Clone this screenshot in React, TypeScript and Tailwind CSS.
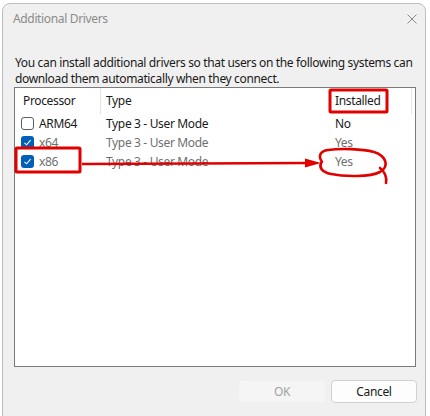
import React from "react";

interface DriverRow {
  processor: string;
  type: string;
  installed: string;
  checked: boolean;
  muted: boolean;
}

const rows: DriverRow[] = [
  { processor: "ARM64", type: "Type 3 - User Mode", installed: "No", checked: false, muted: false },
  { processor: "x64", type: "Type 3 - User Mode", installed: "Yes", checked: true, muted: true },
  { processor: "x86", type: "Type 3 - User Mode", installed: "Yes", checked: true, muted: true },
];

const CheckBox: React.FC<{ checked: boolean }> = ({ checked }) =>
  checked ? (
    <span className="flex h-[13px] w-[13px] items-center justify-center rounded-[3px] bg-[#005fb8]">
      <svg width="9" height="9" viewBox="0 0 9 9" fill="none">
        <path d="M1.5 4.8 L3.6 6.8 L7.6 2.2" stroke="white" strokeWidth="1.1" />
      </svg>
    </span>
  ) : (
    <span className="h-[13px] w-[13px] rounded-[3px] border border-[#5d5d5d] bg-white" />
  );

const App: React.FC = () => {
  return (
    <div
      className="relative h-[416px] w-[430px] overflow-hidden bg-white text-[12px] tracking-[-0.35px] text-[#1a1a1a]"
      style={{ fontFamily: '"Noto Sans", "Open Sans", sans-serif' }}
    >
      {/* dialog window */}
      <div className="ml-[2px] mt-[3px] h-[420px] w-[424px] rounded-t-[8px] border border-[#bdbdbd] bg-[#f0f0f0]">
        <div className="flex h-[29px] items-center justify-between pl-[10px] pr-[6px]">
          <span className="text-[12px] text-[#8b8b8b]">Additional Drivers</span>
          <svg width="10" height="10" viewBox="0 0 10 10" className="mr-[2px]">
            <path d="M0.5 0.5 L9.5 9.5 M9.5 0.5 L0.5 9.5" stroke="#8a8a8a" strokeWidth="1" />
          </svg>
        </div>

        <p className="mt-[22px] whitespace-nowrap pl-[12px] leading-[16px]">
          You can install additional drivers so that users on the following systems can
          <br />
          download them automatically when they connect.
        </p>

        {/* list */}
        <div className="ml-[11px] h-[280px] w-[402px] border border-[#7a7a7a] bg-white">
          <div className="flex h-[26px] items-center">
            <div className="flex h-full w-[86px] items-center border-r border-[#e5e5e5] pl-[8px]">Processor</div>
            <div className="w-[229px] pl-[5px]">Type</div>
            <div className="flex h-full w-[82px] items-center border-r border-[#e5e5e5] pl-[5px]">Installed</div>
          </div>
          {rows.map(r => (
            <div
              key={r.processor}
              className={`flex h-[19px] items-center ${r.muted ? "text-[#6f6f6f]" : "text-[#1a1a1a]"}`}
            >
              <div className="flex w-[86px] items-center gap-[5px] pl-[6px]">
                <CheckBox checked={r.checked} />
                <span>{r.processor}</span>
              </div>
              <div className="w-[229px] pl-[5px]">{r.type}</div>
              <div className="pl-[5px]">{r.installed}</div>
            </div>
          ))}
        </div>

        <div className="mt-[13px] flex justify-end gap-[5px] pr-[8px]">
          <button className="h-[23px] w-[88px] rounded-[4px] border border-[#f0f0f0] bg-[#f5f5f5] text-[#a2a2a2]">
            OK
          </button>
          <button className="h-[23px] w-[86px] rounded-[4px] border border-[#d0d0d0] bg-[#fdfdfd] text-[#1a1a1a]">
            Cancel
          </button>
        </div>
      </div>

      {/* red annotations */}
      <svg className="pointer-events-none absolute left-0 top-0" width="430" height="416" fill="none">
        <rect x="330" y="90" width="57" height="22" stroke="#e00000" strokeWidth="3" rx="1" />
        <rect x="16" y="148" width="64" height="24" stroke="#e00000" strokeWidth="3" rx="1" />
        <path d="M82 164 L310 163" stroke="#e00000" strokeWidth="2.5" />
        <path d="M305 158.5 L321 163 L305 167.5 Z" fill="#e00000" />
        <path
          d="M322 162 C318 156 320 151 328 150 C342 148 362 149 374 152 C386 156 390 166 380 172 C370 177 345 177 331 174 C322 172 319 168 321 163 M380 168 C385 172 387 177 386 183"
          stroke="#e00000"
          strokeWidth="2.6"
          strokeLinecap="round"
        />
      </svg>
    </div>
  );
};

export default App;
